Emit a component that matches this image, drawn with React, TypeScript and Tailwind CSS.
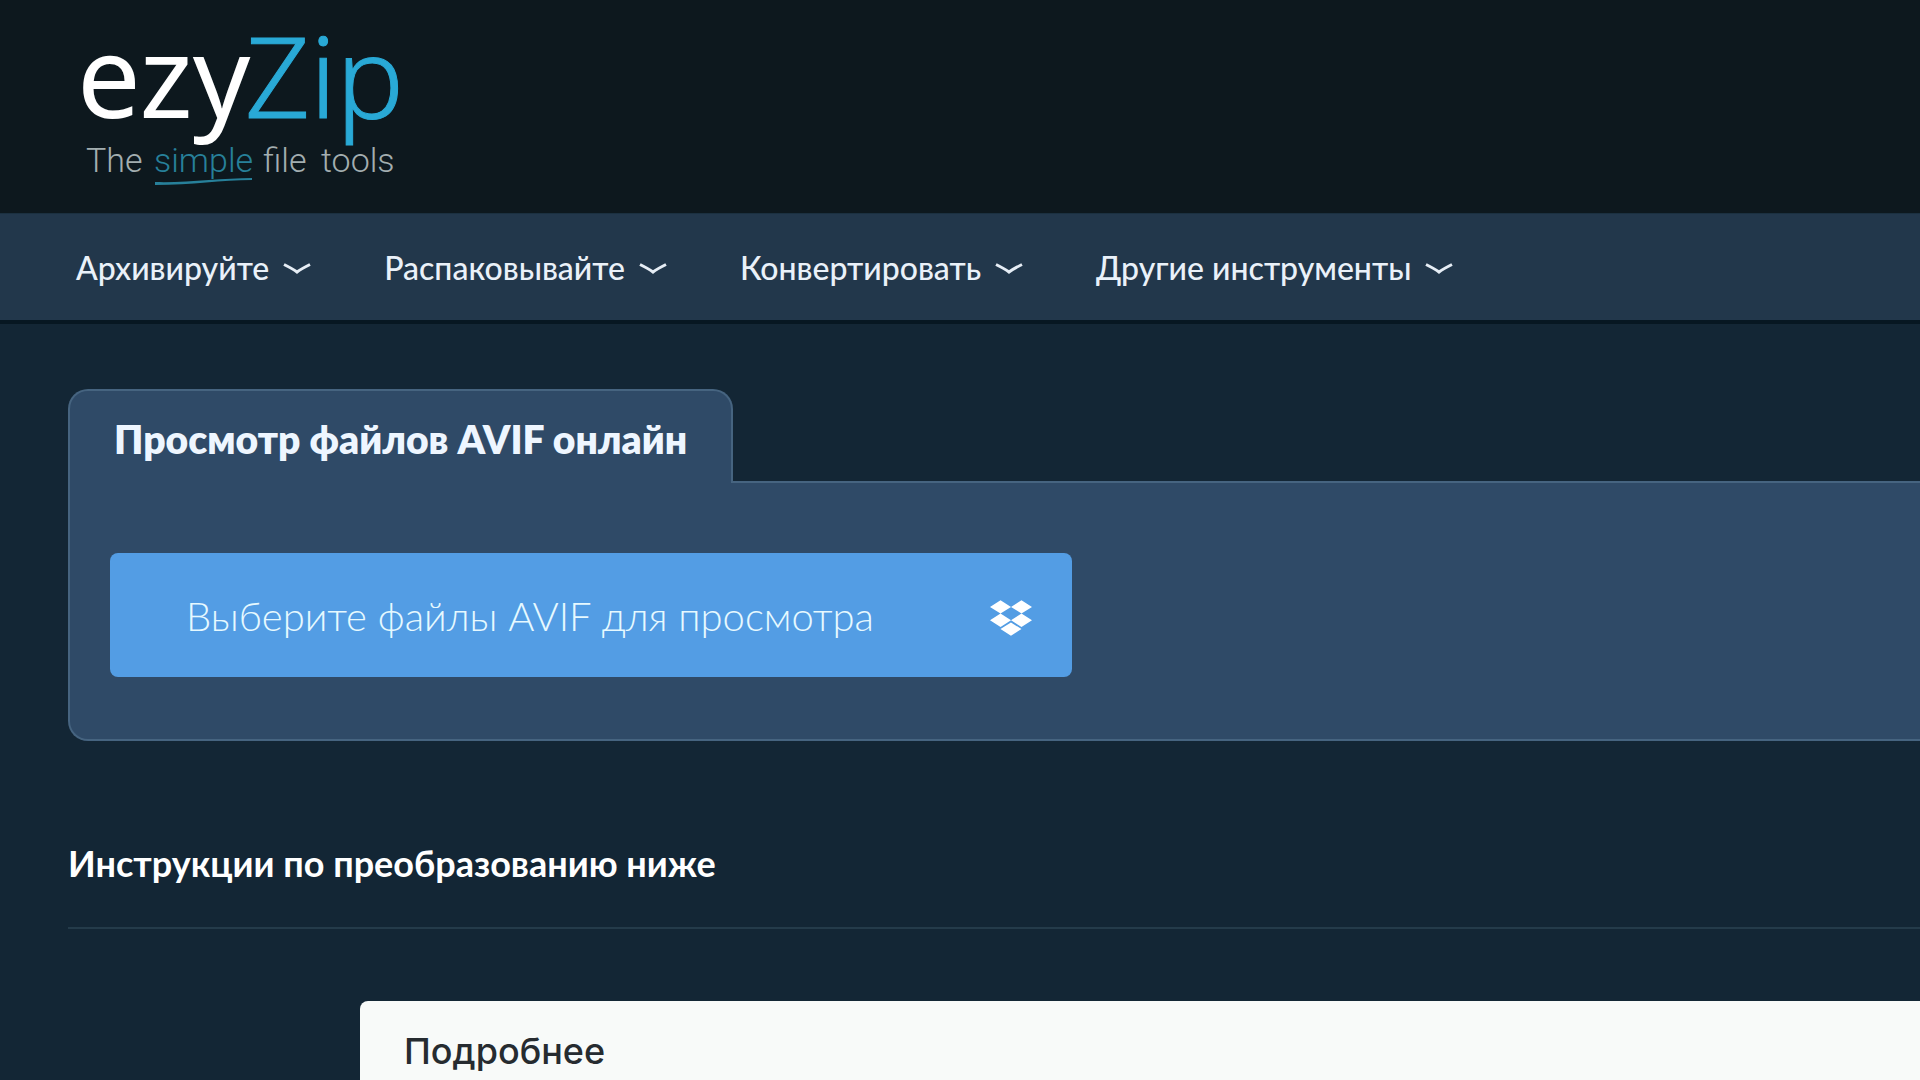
import { FaDropbox } from 'react-icons/fa';

const menuItems = ['Архивируйте', 'Распаковывайте', 'Конвертировать', 'Другие инструменты'];

function Logo() {
  return (
    <a href="#" aria-label="ezyZip" className="block w-fit">
      <svg width="360" height="213" viewBox="0 0 360 213" className="block overflow-visible">
        <g fontFamily='"Noto Sans", sans-serif' fontSize="113">
          <text x="-5" y="118" fill="#ffffff">ezy</text>
          <text x="163" y="118" fontWeight="300" fill="#29a9d6" stroke="#29a9d6">Zip</text>
        </g>
        <g fontFamily="Roboto, sans-serif" fontSize="34" fontWeight="300" fill="#a3aeb0">
          <text x="4" y="172">The</text>
          <text x="72" y="172" fill="#27809a">simple</text>
          <text x="181" y="172">file</text>
          <text x="239" y="172">tools</text>
        </g>
        <path d="M73 182 C105 183 140 178 170 178 L170 180 C140 180 110 185 73 185 Z" fill="#27809a" />
      </svg>
    </a>
  );
}

function Chevron() {
  return (
    <svg width="28" height="12" viewBox="0 0 28 12" fill="none" stroke="#e6edf5" strokeWidth="3" className="mt-0.5">
      <path d="M1 1.5 C6 4 10 6 14 9 C18 6 22 4 27 1.5" />
    </svg>
  );
}

function NavBar() {
  return (
    <nav className="flex h-[111px] items-center gap-[73px] border-t border-b-4 border-t-[#1b3040] border-b-[#071722] bg-[#22374b] px-[76px] pt-0.5">
      {menuItems.map((item) => (
        <button key={item} type="button" className="flex items-center gap-3.5 whitespace-nowrap text-[32px] leading-10 font-medium text-[#eaf1f9]">
          {item}
          <Chevron />
        </button>
      ))}
    </nav>
  );
}

function FilePanel() {
  return (
    <section className="pt-[65px]">
      <div className="relative z-10 -mb-0.5 h-[94px] w-fit rounded-t-[20px] border-2 border-b-0 border-[#466480] bg-[#2f4a67] px-11 pt-6">
        <h1 className="text-[39px] leading-[48px] font-extrabold text-[#eef6ff]">Просмотр файлов AVIF онлайн</h1>
      </div>
      <div className="rounded-bl-[20px] border-2 border-r-0 border-[#466480] bg-[#2f4a67] px-10 pt-[70px] pb-[62px]">
        <div className="flex h-[124px] w-[962px] items-center justify-between rounded-lg bg-[#539de4] pt-0.5 pr-10 pl-[76px] text-white">
          <button type="button" className="text-[40px] leading-[52px] font-light text-[#e6f9ff]">
            Выберите файлы AVIF для просмотра
          </button>
          <button type="button" aria-label="Dropbox" className="pt-1">
            <FaDropbox size={42} />
          </button>
        </div>
      </div>
    </section>
  );
}

export default function App() {
  return (
    <div className="h-screen overflow-hidden bg-[#132635] font-['Lato','Noto_Sans',sans-serif]">
      <header className="bg-[#0d181e] pl-[82px]">
        <Logo />
      </header>
      <NavBar />
      <main className="pl-[68px]">
        <FilePanel />
        <h2 className="mt-[98px] border-b-2 border-[#243b4a] pb-10 text-[36px] leading-[48px] font-bold text-white">
          Инструкции по преобразованию ниже
        </h2>
        <aside className="mt-[72px] ml-[292px] rounded-tl-lg bg-[#f8faf9] px-11 py-7">
          <h3 className="font-['Inter','Noto_Sans',sans-serif] text-[36px] leading-[44px] font-medium text-[#262b30]">Подробнее</h3>
        </aside>
      </main>
    </div>
  );
}
